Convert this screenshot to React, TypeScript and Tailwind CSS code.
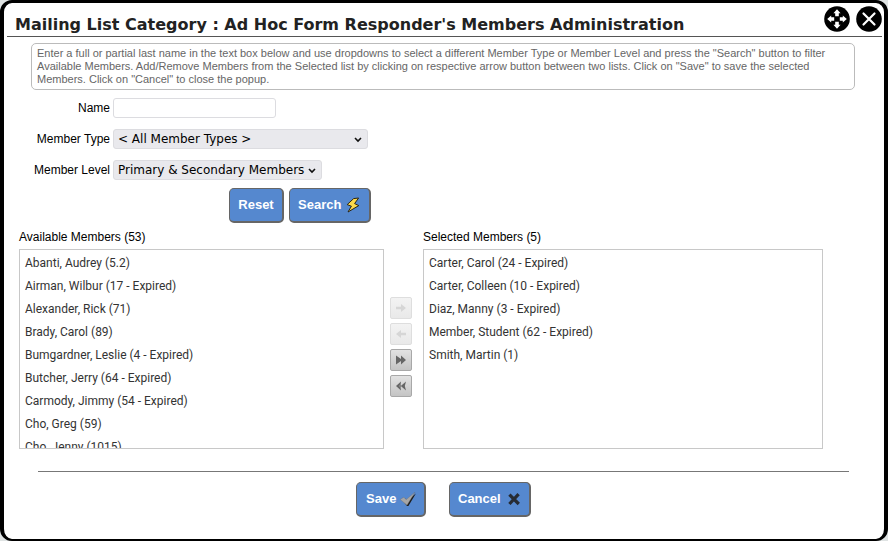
import type { ReactNode } from 'react';

const available = [
  'Abanti, Audrey (5.2)',
  'Airman, Wilbur (17 - Expired)',
  'Alexander, Rick (71)',
  'Brady, Carol (89)',
  'Bumgardner, Leslie (4 - Expired)',
  'Butcher, Jerry (64 - Expired)',
  'Carmody, Jimmy (54 - Expired)',
  'Cho, Greg (59)',
  'Cho, Jenny (1015)',
];

const selected = [
  'Carter, Carol (24 - Expired)',
  'Carter, Colleen (10 - Expired)',
  'Diaz, Manny (3 - Expired)',
  'Member, Student (62 - Expired)',
  'Smith, Martin (1)',
];

const ARM = 'M13 3.2 L16.6 7.2 H14.8 V10.2 H11.2 V7.2 H9.4 Z';

function MoveIcon() {
  return (
    <svg viewBox="0 0 26 26" className="block h-[26px] w-[26px]">
      <circle cx="13" cy="13" r="12.8" fill="#000" />
      {[0, 90, 180, 270].map((angle) => (
        <path key={angle} d={ARM} fill="#fff" transform={`rotate(${angle} 13 13)`} />
      ))}
    </svg>
  );
}

function CloseIcon() {
  return (
    <svg viewBox="0 0 26 26" className="block h-[26px] w-[26px]">
      <circle cx="13" cy="13" r="12.8" fill="#000" />
      <path d="M7.5 7.5 L18.5 18.5 M18.5 7.5 L7.5 18.5" stroke="#fff" strokeWidth="2.2" strokeLinecap="round" />
    </svg>
  );
}

function BoltIcon() {
  return (
    <svg viewBox="0 0 14 16" className="h-4 w-[14px]">
      <path
        d="M12.6 1 L7.6 1.6 L1.2 7.6 L5.4 9.2 L2 15 L12.8 8.6 L8.6 6.6 Z"
        fill="#fbd94c"
        stroke="#2a2413"
        strokeWidth="1"
        strokeLinejoin="round"
      />
    </svg>
  );
}

function CheckIcon() {
  return (
    <svg viewBox="0 0 16 14" className="h-[14px] w-4">
      <path d="M2 7.8 L5 6.4 L7.4 8.6 L15.9 1.4 L8.4 14 H7 Z" fill="#1d1d1d" />
      <path d="M0.2 7.4 L3.8 5.2 L6.2 7.6 L15 0.2 L7 13.2 Z" fill="#a6a6a6" stroke="#666" strokeWidth="0.3" />
    </svg>
  );
}

function CrossIcon() {
  return (
    <svg viewBox="0 0 14 14" className="h-[14px] w-[14px]">
      <path d="M2.4 2.6 L11.8 12 M11.6 2.2 L2.4 12" stroke="#262b33" strokeWidth="3.2" />
    </svg>
  );
}

function Chevron() {
  return (
    <svg viewBox="0 0 8 6" className="pointer-events-none absolute top-2 right-[6px] h-[6px] w-2">
      <path d="M1 1 L4 4 L7 1" fill="none" stroke="#111" strokeWidth="1.6" />
    </svg>
  );
}

function Dropdown({ id, value, width }: { id: string; value: string; width: string }) {
  return (
    <div className={`relative ${width}`}>
      <select
        id={id}
        className="block h-5 w-full appearance-none rounded-[3px] border border-[#dcdce0] bg-[#e9e9ed] pl-1 font-['DejaVu_Sans',Verdana,sans-serif] text-[12px] leading-[18px] text-black"
      >
        <option>{value}</option>
      </select>
      <Chevron />
    </div>
  );
}

function Button({ className = '', children }: { className?: string; children: ReactNode }) {
  return (
    <button
      type="button"
      className={`flex h-[35px] items-center rounded-[5px] border border-r-2 border-b-2 border-[#666] bg-[#5588cf] text-[13px] font-bold text-white ${className}`}
    >
      {children}
    </button>
  );
}

function TransferButton({ label, path, disabled }: { label: string; path: string; disabled?: boolean }) {
  return (
    <button
      type="button"
      aria-label={label}
      disabled={disabled}
      className="flex h-[22px] w-[22px] items-center justify-center rounded-[2px] border border-[#a8a8a8] bg-linear-to-b from-[#e2e2e2] to-[#c4c4c4] text-[#666] disabled:border-[#dedede] disabled:from-[#f3f3f3] disabled:to-[#e9e9e9] disabled:text-[#d6d6d6]"
    >
      <svg viewBox="0 0 12 10" className="h-[10px] w-3">
        <path d={path} fill="currentColor" />
      </svg>
    </button>
  );
}

function MemberList({ title, items }: { title: string; items: string[] }) {
  return (
    <section className="min-w-0">
      <h2 className="h-5 text-[12px] leading-[16px] text-black">{title}</h2>
      <ul
        role="listbox"
        aria-label={title}
        className="h-[200px] overflow-hidden border border-[#c8c8c8] px-[5px] py-[2px] font-[Roboto,'Segoe_UI',sans-serif] text-[12px] leading-[23px] text-[#333]"
      >
        {items.map((item) => (
          <li key={item} role="option" aria-selected={false}>
            {item}
          </li>
        ))}
      </ul>
    </section>
  );
}

export default function App() {
  return (
    <div className="min-h-screen bg-[#dfe3e3] font-['Liberation_Sans',Arial,sans-serif]">
      <main className="flex min-h-screen flex-col rounded-[12px] border-x-4 border-t-3 border-b-2 border-black bg-white">
        <header className="mr-[2px] ml-[3px] flex h-[34px] items-start justify-between border-b border-[#555] pl-2">
          <h1 className="pt-[10px] font-['DejaVu_Sans',Verdana,sans-serif] text-[16px] leading-[24px] font-bold text-[#222]">
            Mailing List Category : Ad Hoc Form Responder's Members Administration
          </h1>
          <div className="flex gap-[6px] pt-[3px]">
            <button type="button" aria-label="Move">
              <MoveIcon />
            </button>
            <button type="button" aria-label="Close">
              <CloseIcon />
            </button>
          </div>
        </header>

        <p className="mt-[6px] mr-[29px] ml-[27px] rounded-[5px] border border-[#bbb] px-[5px] py-[3px] text-[11px] leading-[13px] text-[#666]">
          Enter a full or partial last name in the text box below and use dropdowns to select a different Member Type or
          Member Level and press the "Search" button to filter Available Members. Add/Remove Members from the Selected
          list by clicking on respective arrow button between two lists. Click on "Save" to save the selected Members.
          Click on "Cancel" to close the popup.
        </p>

        <form className="mt-2 ml-[15px] w-[352px] text-[12px] text-black">
          <div className="grid grid-cols-[91px_1fr] items-center gap-x-[3px] gap-y-[11px]">
            <label htmlFor="name" className="text-right">
              Name
            </label>
            <input id="name" type="text" className="h-5 w-[163px] rounded-[3px] border border-[#dcdce0] px-1" />
            <label htmlFor="type" className="text-right">
              Member Type
            </label>
            <Dropdown id="type" value="< All Member Types >" width="w-[255px]" />
            <label htmlFor="level" className="text-right">
              Member Level
            </label>
            <Dropdown id="level" value="Primary & Secondary Members" width="w-[209px]" />
          </div>
          <div className="mt-2 flex justify-end gap-[5px]">
            <Button className="w-[55px] justify-center">Reset</Button>
            <Button className="w-[82px] justify-between pr-[9px] pl-2">
              Search
              <BoltIcon />
            </Button>
          </div>
        </form>

        <div className="mt-[6px] mr-[61px] ml-[15px] grid grid-cols-[365fr_39px_400fr]">
          <MemberList title="Available Members (53)" items={available} />
          <div className="flex flex-col gap-1 pt-[68px] pl-[6px]">
            <TransferButton label="Add" disabled path="M1 3.8 H6 V1 L11 5 L6 9 V6.2 H1 Z" />
            <TransferButton label="Remove" disabled path="M11 3.8 H6 V1 L1 5 L6 9 V6.2 H11 Z" />
            <TransferButton label="Add all" path="M1 0.5 L6 4 V0.5 L11 5 L6 9.5 V6 L1 9.5 Z" />
            <TransferButton
              label="Remove all"
              path="M6 0.5 L1 5 L6 9.5 L5.2 5 Z M11 0.5 L5.8 5 L11 9.5 L9.8 5 Z M6 0.5 V9.5 L4.6 5 Z"
            />
          </div>
          <MemberList title="Selected Members (5)" items={selected} />
        </div>

        <footer className="mt-[22px] mr-[35px] ml-[34px] flex justify-center gap-[23px] border-t border-[#777] pt-[10px] pb-[22px]">
          <Button className="w-[70px] justify-between pr-2 pl-[9px]">
            Save
            <CheckIcon />
          </Button>
          <Button className="w-[82px] justify-between pr-2 pl-2">
            Cancel
            <CrossIcon />
          </Button>
        </footer>
      </main>
    </div>
  );
}
